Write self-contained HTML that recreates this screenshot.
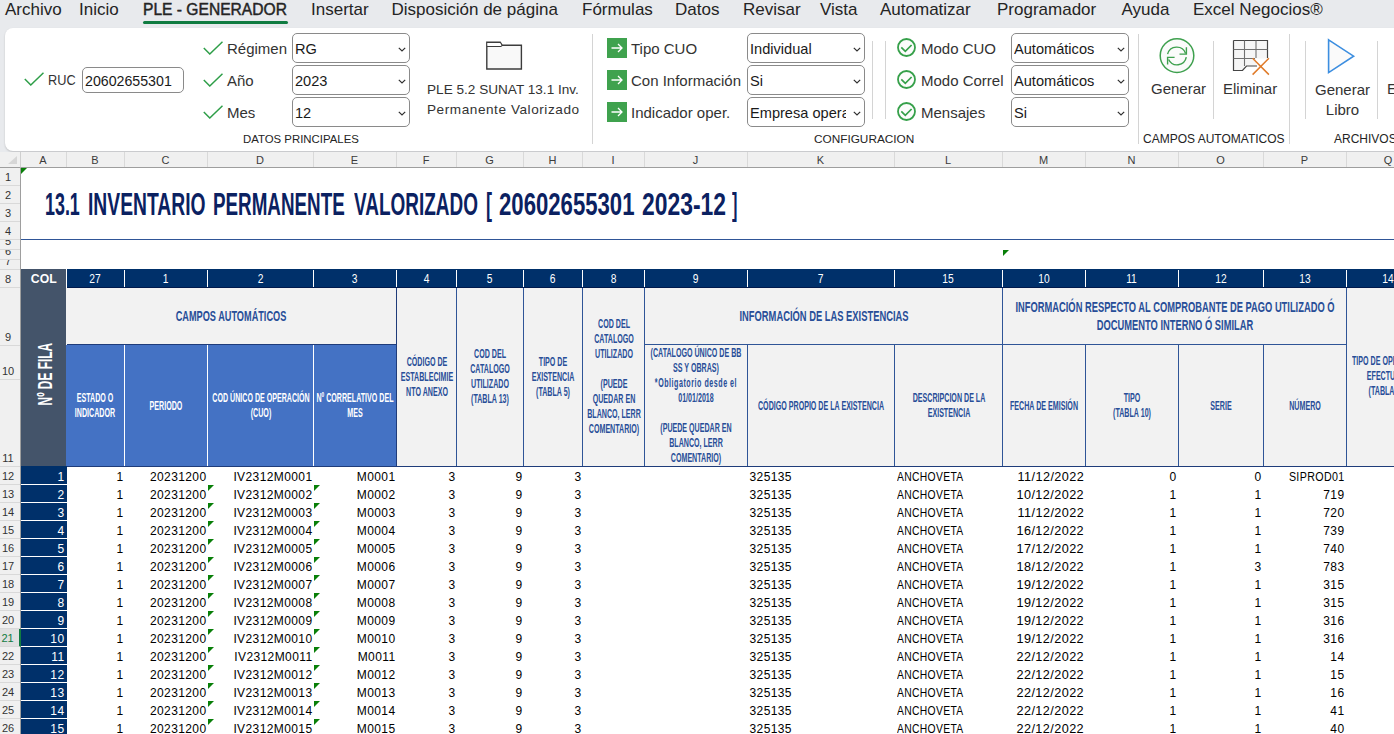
<!DOCTYPE html><html><head><meta charset="utf-8"><style>
*{box-sizing:border-box;margin:0;padding:0}
html,body{width:1394px;height:734px;overflow:hidden}
body{position:relative;background:#e8eaed;font-family:"Liberation Sans",sans-serif;color:#242424}
.ab{position:absolute;white-space:nowrap}
.tab{position:absolute;top:-1px;font-size:17px;color:#242424;line-height:22px}
.rb{position:absolute;font-size:15px;color:#333;line-height:18px;white-space:nowrap}
.sel{position:absolute;height:30px;border:1px solid #8a8a8a;border-radius:5px;background:#fff;font-size:14.6px;line-height:31px;padding-left:2px;padding-right:18px;color:#1a1a1a;overflow:hidden;white-space:nowrap}
.sel svg{position:absolute;right:3px;top:12.5px}
.sel i{font-style:normal;display:block;overflow:hidden;width:100%;height:100%}
.sep{position:absolute;width:1px;background:#d4d4d4}
.glab{position:absolute;font-size:12px;color:#242424;line-height:14px;white-space:nowrap}
.ch{position:absolute;top:152px;height:16px;font-size:11px;line-height:16px;text-align:center;color:#3b3b3b;border-right:1px solid #d9d9d9}
.rh{position:absolute;left:0;width:20px;padding-right:4px;font-size:11px;text-align:center;color:#333;border-bottom:1px solid #d9d9d9;overflow:hidden;display:flex;align-items:flex-end;justify-content:center;line-height:14px}
.c{position:absolute;overflow:hidden;white-space:nowrap}
.hd{position:absolute;display:flex;align-items:center;justify-content:center;text-align:center;color:#2f5597;font-weight:bold;overflow:hidden}
.hd>span{position:absolute;left:50%;top:50%;display:block;transform-origin:center center;line-height:15px}
.d{position:absolute;height:18px;font-size:12px;letter-spacing:0.4px;line-height:18px;color:#000;white-space:nowrap}
.tri{position:absolute;width:0;height:0;border-top:6px solid #087f08;border-right:6px solid transparent}

</style></head><body>
<div class="tab" style="left:5px">Archivo</div>
<div class="tab" style="left:79px">Inicio</div>
<div class="tab" style="left:311px">Insertar</div>
<div class="tab" style="left:391.5px">Disposición de página</div>
<div class="tab" style="left:582px">Fórmulas</div>
<div class="tab" style="left:675px">Datos</div>
<div class="tab" style="left:743px">Revisar</div>
<div class="tab" style="left:820px">Vista</div>
<div class="tab" style="left:880px">Automatizar</div>
<div class="tab" style="left:997px">Programador</div>
<div class="tab" style="left:1121.5px">Ayuda</div>
<div class="tab" style="left:1193px">Excel Negocios®</div>
<div class="tab" style="left:143px;font-size:16px;-webkit-text-stroke:0.45px #242424;transform:scaleX(0.975);transform-origin:0 0">PLE - GENERADOR</div>
<div class="ab" style="left:143px;top:21px;width:145px;height:3px;background:#107c41;border-radius:2px"></div>
<div class="ab" style="left:5px;top:28px;width:1400px;height:123px;background:#fff;border-radius:8px;box-shadow:0 1px 2px rgba(0,0,0,.18)"></div>
<svg class="ab" style="left:24px;top:71.5px" width="20" height="14" viewBox="0 0 20 14"><path d="M0.8 7 L6.8 13 L19.5 0.8" fill="none" stroke="#2e9e48" stroke-width="1.5"/></svg>
<div class="rb" style="left:48px;top:71px;transform:scaleX(0.85);transform-origin:0 0">RUC</div>
<div class="ab" style="left:82px;top:67px;width:102px;height:26px;border:1px solid #8a8a8a;border-radius:5px;background:#fff"></div>
<div class="rb" style="left:85px;top:72px;font-size:14.2px;color:#1a1a1a">20602655301</div>
<svg class="ab" style="left:203px;top:41px" width="20" height="14" viewBox="0 0 20 14"><path d="M0.8 7 L6.8 13 L19.5 0.8" fill="none" stroke="#2e9e48" stroke-width="1.5"/></svg>
<div class="rb" style="left:227px;top:40px">Régimen</div>
<div class="sel" style="left:292px;top:33px;width:118px"><i>RG</i><svg width="8" height="5" viewBox="0 0 8 5"><path d="M0.8 0.8 L4 4 L7.2 0.8" fill="none" stroke="#333" stroke-width="1.2"/></svg></div>
<svg class="ab" style="left:203px;top:73px" width="20" height="14" viewBox="0 0 20 14"><path d="M0.8 7 L6.8 13 L19.5 0.8" fill="none" stroke="#2e9e48" stroke-width="1.5"/></svg>
<div class="rb" style="left:227px;top:72px">Año</div>
<div class="sel" style="left:292px;top:65px;width:118px"><i>2023</i><svg width="8" height="5" viewBox="0 0 8 5"><path d="M0.8 0.8 L4 4 L7.2 0.8" fill="none" stroke="#333" stroke-width="1.2"/></svg></div>
<svg class="ab" style="left:203px;top:105px" width="20" height="14" viewBox="0 0 20 14"><path d="M0.8 7 L6.8 13 L19.5 0.8" fill="none" stroke="#2e9e48" stroke-width="1.5"/></svg>
<div class="rb" style="left:227px;top:104px">Mes</div>
<div class="sel" style="left:292px;top:97px;width:118px"><i>12</i><svg width="8" height="5" viewBox="0 0 8 5"><path d="M0.8 0.8 L4 4 L7.2 0.8" fill="none" stroke="#333" stroke-width="1.2"/></svg></div>
<div class="glab" style="left:243px;top:132px;font-size:11.4px">DATOS PRINCIPALES</div>
<svg class="ab" style="left:485px;top:41px" width="38" height="30" viewBox="0 0 38 30"><path d="M1.8 1.3 H15.2 L17.3 4.3 H36.4 V28 H1.8 Z" fill="#f9f9f9" stroke="#3c3c3c" stroke-width="1.4"/><path d="M1.8 5.4 H15.8 L17.3 4.3" fill="none" stroke="#3c3c3c" stroke-width="1.3"/><path d="M2.5 2 H15 L16.5 4.3 L15.5 4.9 H2.5 Z" fill="#fff"/></svg>
<div class="rb" style="left:427px;top:80px;font-size:13.6px;line-height:20px">PLE 5.2 SUNAT 13.1 Inv.<br><span style="letter-spacing:0.55px">Permanente Valorizado</span></div>
<div class="sep" style="left:592px;top:34px;height:110px"></div>
<div class="ab" style="left:607px;top:38px;width:20px;height:20px;background:#3fa24e"><svg width="20" height="20" viewBox="0 0 20 20"><path d="M4.5 10 H15 M11 6 L15 10 L11 14" fill="none" stroke="#fff" stroke-width="1.3"/></svg></div>
<div class="rb" style="left:631px;top:40px">Tipo CUO</div>
<div class="sel" style="left:747px;top:33px;width:118px"><i>Individual</i><svg width="8" height="5" viewBox="0 0 8 5"><path d="M0.8 0.8 L4 4 L7.2 0.8" fill="none" stroke="#333" stroke-width="1.2"/></svg></div>
<div class="ab" style="left:607px;top:70px;width:20px;height:20px;background:#3fa24e"><svg width="20" height="20" viewBox="0 0 20 20"><path d="M4.5 10 H15 M11 6 L15 10 L11 14" fill="none" stroke="#fff" stroke-width="1.3"/></svg></div>
<div class="rb" style="left:631px;top:72px">Con Información</div>
<div class="sel" style="left:747px;top:65px;width:118px"><i>Si</i><svg width="8" height="5" viewBox="0 0 8 5"><path d="M0.8 0.8 L4 4 L7.2 0.8" fill="none" stroke="#333" stroke-width="1.2"/></svg></div>
<div class="ab" style="left:607px;top:102px;width:20px;height:20px;background:#3fa24e"><svg width="20" height="20" viewBox="0 0 20 20"><path d="M4.5 10 H15 M11 6 L15 10 L11 14" fill="none" stroke="#fff" stroke-width="1.3"/></svg></div>
<div class="rb" style="left:631px;top:104px">Indicador oper.</div>
<div class="sel" style="left:747px;top:97px;width:118px"><i>Empresa opera</i><svg width="8" height="5" viewBox="0 0 8 5"><path d="M0.8 0.8 L4 4 L7.2 0.8" fill="none" stroke="#333" stroke-width="1.2"/></svg></div>
<div class="glab" style="left:814px;top:132px;font-size:11.8px">CONFIGURACION</div>
<div class="sep" style="left:872px;top:41px;height:78px"></div>
<div class="sep" style="left:885px;top:41px;height:78px"></div>
<svg class="ab" style="left:897px;top:38px" width="19" height="19" viewBox="0 0 19 19"><circle cx="9.5" cy="9.5" r="8.5" fill="#fcfcfc" stroke="#36a04a" stroke-width="1.8"/><path d="M4.3 9.4 L8.3 13.3 L14.6 7" fill="none" stroke="#36a04a" stroke-width="1.7"/></svg>
<div class="rb" style="left:921px;top:40px">Modo CUO</div>
<div class="sel" style="left:1011px;top:33px;width:118px"><i>Automáticos</i><svg width="8" height="5" viewBox="0 0 8 5"><path d="M0.8 0.8 L4 4 L7.2 0.8" fill="none" stroke="#333" stroke-width="1.2"/></svg></div>
<svg class="ab" style="left:897px;top:70px" width="19" height="19" viewBox="0 0 19 19"><circle cx="9.5" cy="9.5" r="8.5" fill="#fcfcfc" stroke="#36a04a" stroke-width="1.8"/><path d="M4.3 9.4 L8.3 13.3 L14.6 7" fill="none" stroke="#36a04a" stroke-width="1.7"/></svg>
<div class="rb" style="left:921px;top:72px">Modo Correl</div>
<div class="sel" style="left:1011px;top:65px;width:118px"><i>Automáticos</i><svg width="8" height="5" viewBox="0 0 8 5"><path d="M0.8 0.8 L4 4 L7.2 0.8" fill="none" stroke="#333" stroke-width="1.2"/></svg></div>
<svg class="ab" style="left:897px;top:102px" width="19" height="19" viewBox="0 0 19 19"><circle cx="9.5" cy="9.5" r="8.5" fill="#fcfcfc" stroke="#36a04a" stroke-width="1.8"/><path d="M4.3 9.4 L8.3 13.3 L14.6 7" fill="none" stroke="#36a04a" stroke-width="1.7"/></svg>
<div class="rb" style="left:921px;top:104px">Mensajes</div>
<div class="sel" style="left:1011px;top:97px;width:118px"><i>Si</i><svg width="8" height="5" viewBox="0 0 8 5"><path d="M0.8 0.8 L4 4 L7.2 0.8" fill="none" stroke="#333" stroke-width="1.2"/></svg></div>
<div class="sep" style="left:1138px;top:34px;height:110px"></div>
<svg class="ab" style="left:1158px;top:37px" width="38" height="38" viewBox="0 0 38 38"><circle cx="19" cy="18.6" r="16.8" fill="#fbfbfb" stroke="#3ea04e" stroke-width="1.5"/><g fill="none" stroke="#3ea04e" stroke-width="1.4"><path d="M9.6 17.2 A9.4 9.4 0 0 1 27.6 16.4"/><path d="M28.4 10.2 V17.1 H21.5"/><path d="M28.3 20.2 A9.4 9.4 0 0 1 10.6 22.5"/><path d="M16.6 20.4 H9.6 V27.6"/></g></svg>
<svg class="ab" style="left:1230px;top:38px" width="42" height="40" viewBox="0 0 42 40"><path d="M3.5 2.5 H37.5 V20.5 H26 V28 H3.5 Z" fill="#f6f6f6"/><path d="M3.5 28 V32.5 H12.5 L16.5 28 H26" fill="#f6f6f6"/><g fill="none" stroke="#454545" stroke-width="1.2"><path d="M3.5 2.5 H37.5 V20"/><path d="M3.5 2.5 V32.5 H12.5 L16.5 28 H27"/></g><g fill="none" stroke="#707070" stroke-width="1.1"><path d="M3.5 11.5 H37.5 M3.5 20.5 H25 M14.5 2.5 V28 M26 2.5 V20"/></g><path d="M22.6 20.3 L38.9 36.6 M38.9 20.3 L22.6 36.6" stroke="#e07b2a" stroke-width="1.5"/></svg>
<div class="rb" style="left:1151px;top:80px">Generar</div>
<div class="sep" style="left:1213px;top:41px;height:78px"></div>
<div class="rb" style="left:1223px;top:80px">Eliminar</div>
<div class="glab" style="left:1143px;top:132px">CAMPOS AUTOMATICOS</div>
<div class="sep" style="left:1289px;top:34px;height:110px"></div>
<div class="sep" style="left:1305px;top:41px;height:78px"></div>
<svg class="ab" style="left:1327px;top:38px" width="30" height="37" viewBox="0 0 30 37"><path d="M1.6 1.8 L26.6 18.2 L1.6 34.6 Z" fill="#fafafa" stroke="#3c8ee0" stroke-width="1.6" stroke-linejoin="miter"/></svg>
<div class="rb" style="left:1315px;top:80px;text-align:center;line-height:20px">Generar<br><span style="display:block;text-align:center">Libro</span></div>
<div class="sep" style="left:1377px;top:41px;height:78px"></div>
<div class="rb" style="left:1387px;top:80px">E</div>
<div class="glab" style="left:1334px;top:132px">ARCHIVOS</div>
<div class="ab" style="left:21px;top:168px;width:1373px;height:566px;background:#fff"></div>
<div class="ab" style="left:0;top:152px;width:1394px;height:16px;background:#f0f0f0;border-bottom:1px solid #9e9e9e"></div>
<div class="ab" style="left:0;top:152px;width:21px;height:16px;background:#f0f0f0;border-right:1px solid #cfcfcf;border-bottom:1px solid #9e9e9e"></div>
<svg class="ab" style="left:8px;top:156px" width="10" height="9"><path d="M9 0 V8 H0 Z" fill="#d6d6d6"/></svg>
<div class="ch" style="left:20px;width:47px;height:15px">A</div>
<div class="ch" style="left:66px;width:59px;height:15px">B</div>
<div class="ch" style="left:124px;width:84px;height:15px">C</div>
<div class="ch" style="left:207px;width:107px;height:15px">D</div>
<div class="ch" style="left:313px;width:84px;height:15px">E</div>
<div class="ch" style="left:396px;width:61px;height:15px">F</div>
<div class="ch" style="left:456px;width:68px;height:15px">G</div>
<div class="ch" style="left:523px;width:60px;height:15px">H</div>
<div class="ch" style="left:582px;width:63px;height:15px">I</div>
<div class="ch" style="left:644px;width:104px;height:15px">J</div>
<div class="ch" style="left:747px;width:148px;height:15px">K</div>
<div class="ch" style="left:894px;width:109px;height:15px">L</div>
<div class="ch" style="left:1002px;width:84px;height:15px">M</div>
<div class="ch" style="left:1085px;width:94px;height:15px">N</div>
<div class="ch" style="left:1178px;width:86px;height:15px">O</div>
<div class="ch" style="left:1263px;width:84px;height:15px">P</div>
<div class="ch" style="left:1346px;width:85px;height:15px">Q</div>
<div class="ab" style="left:0;top:168px;width:21px;height:566px;background:#f0f0f0;border-right:1px solid #9e9e9e"></div>
<div class="rh" style="top:169px;height:17px;padding-bottom:1px;">1</div>
<div class="rh" style="top:186px;height:18px;padding-bottom:1px;">2</div>
<div class="rh" style="top:204px;height:18px;padding-bottom:1px;">3</div>
<div class="rh" style="top:222px;height:18px;padding-bottom:1px;">4</div>
<div class="rh" style="top:240px;height:10px;padding-bottom:1px;">5</div>
<div class="rh" style="top:250px;height:10px;padding-bottom:1px;">6</div>
<div class="rh" style="top:260px;height:10px;padding-bottom:1px;">7</div>
<div class="rh" style="top:270px;height:18px;padding-bottom:1px;">8</div>
<div class="rh" style="top:288px;height:58px;padding-bottom:1px;">9</div>
<div class="rh" style="top:346px;height:34px;padding-bottom:1px;">10</div>
<div class="rh" style="top:380px;height:87px;padding-bottom:1px;">11</div>
<div class="rh" style="top:467px;height:18px;padding-bottom:1px;">12</div>
<div class="rh" style="top:485px;height:18px;padding-bottom:1px;">13</div>
<div class="rh" style="top:503px;height:18px;padding-bottom:1px;">14</div>
<div class="rh" style="top:521px;height:18px;padding-bottom:1px;">15</div>
<div class="rh" style="top:539px;height:18px;padding-bottom:1px;">16</div>
<div class="rh" style="top:557px;height:18px;padding-bottom:1px;">17</div>
<div class="rh" style="top:575px;height:18px;padding-bottom:1px;">18</div>
<div class="rh" style="top:593px;height:18px;padding-bottom:1px;">19</div>
<div class="rh" style="top:611px;height:18px;padding-bottom:1px;">20</div>
<div class="rh" style="top:629px;height:18px;padding-bottom:1px;background:#e0e0e0;color:#107c41;border-right:2px solid #107c41;width:21px;">21</div>
<div class="rh" style="top:647px;height:18px;padding-bottom:1px;">22</div>
<div class="rh" style="top:665px;height:18px;padding-bottom:1px;">23</div>
<div class="rh" style="top:683px;height:18px;padding-bottom:1px;">24</div>
<div class="rh" style="top:701px;height:18px;padding-bottom:1px;">25</div>
<div class="rh" style="top:719px;height:18px;padding-bottom:1px;">26</div>
<div class="rh" style="top:737px;height:18px;padding-bottom:1px;">27</div>
<div class="ab" style="left:45.2px;top:187px;font-size:32px;font-weight:bold;color:#0b2161;line-height:34px;transform:scaleX(0.5588);transform-origin:0 0">13.1</div>
<div class="ab" style="left:87.8px;top:187px;font-size:32px;font-weight:bold;color:#0b2161;line-height:34px;transform:scaleX(0.6027);transform-origin:0 0">INVENTARIO</div>
<div class="ab" style="left:213px;top:187px;font-size:32px;font-weight:bold;color:#0b2161;line-height:34px;transform:scaleX(0.5879);transform-origin:0 0">PERMANENTE</div>
<div class="ab" style="left:353.8px;top:187px;font-size:32px;font-weight:bold;color:#0b2161;line-height:34px;transform:scaleX(0.5928);transform-origin:0 0">VALORIZADO</div>
<div class="ab" style="left:486px;top:187px;font-size:32px;font-weight:bold;color:#0b2161;line-height:34px;transform:scaleX(0.5629);transform-origin:0 0">[</div>
<div class="ab" style="left:498.5px;top:187px;font-size:32px;font-weight:bold;color:#0b2161;line-height:34px;transform:scaleX(0.6922);transform-origin:0 0">20602655301</div>
<div class="ab" style="left:641.8px;top:187px;font-size:32px;font-weight:bold;color:#0b2161;line-height:34px;transform:scaleX(0.7153);transform-origin:0 0">2023-12</div>
<div class="ab" style="left:732px;top:187px;font-size:32px;font-weight:bold;color:#0b2161;line-height:34px;transform:scaleX(0.5066);transform-origin:0 0">]</div>
<div class="ab" style="left:21px;top:239px;width:1373px;height:1px;background:#2f5597"></div>
<div class="tri" style="left:21px;top:168px"></div>
<div class="tri" style="left:1003px;top:250px"></div>
<div class="c" style="left:21px;top:269px;width:45px;height:197px;background:#44546a"></div>
<div class="ab" style="left:21px;top:270px;width:46px;height:18px;color:#fff;font-weight:bold;font-size:13px;line-height:18px;text-align:center"><span style="display:inline-block;transform:scaleX(0.94)">COL</span></div>
<div class="c" style="left:67px;top:269px;width:1327px;height:19px;background:#00306a;border-bottom:1px solid #001a4d"></div>
<div class="ab" style="left:66px;top:270px;width:58px;height:18px;color:#fff;font-size:12.5px;line-height:18px;text-align:center"><span style="display:inline-block;transform:scaleX(0.82)">27</span></div>
<div class="ab" style="left:124px;top:270px;width:83px;height:18px;color:#fff;font-size:12.5px;line-height:18px;text-align:center"><span style="display:inline-block;transform:scaleX(0.82)">1</span></div>
<div class="ab" style="left:124px;top:270px;width:1px;height:17px;background:#fff"></div>
<div class="ab" style="left:207px;top:270px;width:106px;height:18px;color:#fff;font-size:12.5px;line-height:18px;text-align:center"><span style="display:inline-block;transform:scaleX(0.82)">2</span></div>
<div class="ab" style="left:207px;top:270px;width:1px;height:17px;background:#fff"></div>
<div class="ab" style="left:313px;top:270px;width:83px;height:18px;color:#fff;font-size:12.5px;line-height:18px;text-align:center"><span style="display:inline-block;transform:scaleX(0.82)">3</span></div>
<div class="ab" style="left:313px;top:270px;width:1px;height:17px;background:#fff"></div>
<div class="ab" style="left:396px;top:270px;width:60px;height:18px;color:#fff;font-size:12.5px;line-height:18px;text-align:center"><span style="display:inline-block;transform:scaleX(0.82)">4</span></div>
<div class="ab" style="left:396px;top:270px;width:1px;height:17px;background:#fff"></div>
<div class="ab" style="left:456px;top:270px;width:67px;height:18px;color:#fff;font-size:12.5px;line-height:18px;text-align:center"><span style="display:inline-block;transform:scaleX(0.82)">5</span></div>
<div class="ab" style="left:456px;top:270px;width:1px;height:17px;background:#fff"></div>
<div class="ab" style="left:523px;top:270px;width:59px;height:18px;color:#fff;font-size:12.5px;line-height:18px;text-align:center"><span style="display:inline-block;transform:scaleX(0.82)">6</span></div>
<div class="ab" style="left:523px;top:270px;width:1px;height:17px;background:#fff"></div>
<div class="ab" style="left:582px;top:270px;width:62px;height:18px;color:#fff;font-size:12.5px;line-height:18px;text-align:center"><span style="display:inline-block;transform:scaleX(0.82)">8</span></div>
<div class="ab" style="left:582px;top:270px;width:1px;height:17px;background:#fff"></div>
<div class="ab" style="left:644px;top:270px;width:103px;height:18px;color:#fff;font-size:12.5px;line-height:18px;text-align:center"><span style="display:inline-block;transform:scaleX(0.82)">9</span></div>
<div class="ab" style="left:644px;top:270px;width:1px;height:17px;background:#fff"></div>
<div class="ab" style="left:747px;top:270px;width:147px;height:18px;color:#fff;font-size:12.5px;line-height:18px;text-align:center"><span style="display:inline-block;transform:scaleX(0.82)">7</span></div>
<div class="ab" style="left:747px;top:270px;width:1px;height:17px;background:#fff"></div>
<div class="ab" style="left:894px;top:270px;width:108px;height:18px;color:#fff;font-size:12.5px;line-height:18px;text-align:center"><span style="display:inline-block;transform:scaleX(0.82)">15</span></div>
<div class="ab" style="left:894px;top:270px;width:1px;height:17px;background:#fff"></div>
<div class="ab" style="left:1002px;top:270px;width:83px;height:18px;color:#fff;font-size:12.5px;line-height:18px;text-align:center"><span style="display:inline-block;transform:scaleX(0.82)">10</span></div>
<div class="ab" style="left:1002px;top:270px;width:1px;height:17px;background:#fff"></div>
<div class="ab" style="left:1085px;top:270px;width:93px;height:18px;color:#fff;font-size:12.5px;line-height:18px;text-align:center"><span style="display:inline-block;transform:scaleX(0.82)">11</span></div>
<div class="ab" style="left:1085px;top:270px;width:1px;height:17px;background:#fff"></div>
<div class="ab" style="left:1178px;top:270px;width:85px;height:18px;color:#fff;font-size:12.5px;line-height:18px;text-align:center"><span style="display:inline-block;transform:scaleX(0.82)">12</span></div>
<div class="ab" style="left:1178px;top:270px;width:1px;height:17px;background:#fff"></div>
<div class="ab" style="left:1263px;top:270px;width:83px;height:18px;color:#fff;font-size:12.5px;line-height:18px;text-align:center"><span style="display:inline-block;transform:scaleX(0.82)">13</span></div>
<div class="ab" style="left:1263px;top:270px;width:1px;height:17px;background:#fff"></div>
<div class="ab" style="left:1346px;top:270px;width:84px;height:18px;color:#fff;font-size:12.5px;line-height:18px;text-align:center"><span style="display:inline-block;transform:scaleX(0.82)">14</span></div>
<div class="ab" style="left:1346px;top:270px;width:1px;height:17px;background:#fff"></div>
<div class="ab" style="left:44.5px;top:374px;width:0;height:0"><div style="position:absolute;left:-60px;top:-11px;width:120px;height:22px;text-align:center;transform:rotate(-90deg);color:#fff;font-weight:bold;font-size:20.5px;line-height:22px"><span style="display:inline-block;transform:scaleX(0.58)">Nº DE FILA</span></div></div>
<div class="hd" style="left:66px;top:288px;width:330px;height:57px;background:#f2f2f2;color:#284e98;font-size:15.5px;"><span style="top:calc(50% + -2px);transform:translate(-50%,-50%) scaleX(0.592);line-height:15px;white-space:nowrap">CAMPOS AUTOMÁTICOS</span></div>
<div class="hd" style="left:66px;top:345px;width:58px;height:121px;background:#4472c4;color:#fff;font-size:12px;"><span style="top:calc(50% + 0px);transform:translate(-50%,-50%) scaleX(0.592);line-height:15px;white-space:nowrap">ESTADO O<br>INDICADOR</span></div>
<div class="hd" style="left:125px;top:345px;width:82px;height:121px;background:#4472c4;color:#fff;font-size:12px;"><span style="top:calc(50% + 0px);transform:translate(-50%,-50%) scaleX(0.592);line-height:15px;white-space:nowrap">PERIODO</span></div>
<div class="hd" style="left:208px;top:345px;width:105px;height:121px;background:#4472c4;color:#fff;font-size:12px;"><span style="top:calc(50% + 0px);transform:translate(-50%,-50%) scaleX(0.592);line-height:15px;white-space:nowrap">COD ÚNICO DE OPERACIÓN<br>(CUO)</span></div>
<div class="hd" style="left:314px;top:345px;width:82px;height:121px;background:#4472c4;color:#fff;font-size:12px;"><span style="top:calc(50% + 0px);transform:translate(-50%,-50%) scaleX(0.592);line-height:15px;white-space:nowrap">Nº CORRELATIVO DEL<br>MES</span></div>
<div class="hd" style="left:397px;top:288px;width:59px;height:178px;background:#f2f2f2;color:#284e98;font-size:12px;"><span style="top:calc(50% + 0px);transform:translate(-50%,-50%) scaleX(0.592);line-height:15px;white-space:nowrap">CÓDIGO DE<br>ESTABLECIMIE<br>NTO ANEXO</span></div>
<div class="hd" style="left:457px;top:288px;width:66px;height:178px;background:#f2f2f2;color:#284e98;font-size:12px;"><span style="top:calc(50% + 0px);transform:translate(-50%,-50%) scaleX(0.592);line-height:15px;white-space:nowrap">COD DEL<br>CATALOGO<br>UTILIZADO<br>(TABLA 13)</span></div>
<div class="hd" style="left:524px;top:288px;width:58px;height:178px;background:#f2f2f2;color:#284e98;font-size:12px;"><span style="top:calc(50% + 0px);transform:translate(-50%,-50%) scaleX(0.592);line-height:15px;white-space:nowrap">TIPO DE<br>EXISTENCIA<br>(TABLA 5)</span></div>
<div class="hd" style="left:583px;top:288px;width:61px;height:178px;background:#f2f2f2;color:#284e98;font-size:12px;"><span style="top:calc(50% + 0px);transform:translate(-50%,-50%) scaleX(0.592);line-height:15px;white-space:nowrap">COD DEL<br>CATALOGO<br>UTILIZADO<br>&nbsp;<br>(PUEDE<br>QUEDAR EN<br>BLANCO, LERR<br>COMENTARIO)</span></div>
<div class="hd" style="left:645px;top:288px;width:357px;height:57px;background:#f2f2f2;color:#284e98;font-size:15.5px;"><span style="top:calc(50% + -2px);transform:translate(-50%,-50%) scaleX(0.604);line-height:15px;white-space:nowrap">INFORMACIÓN DE LAS EXISTENCIAS</span></div>
<div class="hd" style="left:645px;top:345px;width:102px;height:121px;background:#f2f2f2;color:#284e98;font-size:12px;"><span style="top:calc(50% + 0px);transform:translate(-50%,-50%) scaleX(0.592);line-height:15px;white-space:nowrap">(CATALOGO ÚNICO DE BB<br>SS Y OBRAS)<br><span style="letter-spacing:0.9px">*Obligatorio desde el</span><br>01/01/2018<br>&nbsp;<br>(PUEDE QUEDAR EN<br>BLANCO, LERR<br>COMENTARIO)</span></div>
<div class="hd" style="left:748px;top:345px;width:146px;height:121px;background:#f2f2f2;color:#284e98;font-size:12px;"><span style="top:calc(50% + 0px);transform:translate(-50%,-50%) scaleX(0.592);line-height:15px;white-space:nowrap">CÓDIGO PROPIO DE LA EXISTENCIA</span></div>
<div class="hd" style="left:895px;top:345px;width:107px;height:121px;background:#f2f2f2;color:#284e98;font-size:12px;"><span style="top:calc(50% + 0px);transform:translate(-50%,-50%) scaleX(0.592);line-height:15px;white-space:nowrap">DESCRIPCION DE LA<br>EXISTENCIA</span></div>
<div class="hd" style="left:1003px;top:288px;width:343px;height:57px;background:#f2f2f2;color:#284e98;font-size:15.5px;"><span style="top:calc(50% + -1px);transform:translate(-50%,-50%) scaleX(0.602);line-height:18px;white-space:nowrap">INFORMACIÓN RESPECTO AL COMPROBANTE DE PAGO UTILIZADO Ó<br>DOCUMENTO INTERNO Ó SIMILAR</span></div>
<div class="hd" style="left:1003px;top:345px;width:82px;height:121px;background:#f2f2f2;color:#284e98;font-size:12px;"><span style="top:calc(50% + 0px);transform:translate(-50%,-50%) scaleX(0.592);line-height:15px;white-space:nowrap">FECHA DE EMISIÓN</span></div>
<div class="hd" style="left:1086px;top:345px;width:92px;height:121px;background:#f2f2f2;color:#284e98;font-size:12px;"><span style="top:calc(50% + 0px);transform:translate(-50%,-50%) scaleX(0.592);line-height:15px;white-space:nowrap">TIPO<br>(TABLA 10)</span></div>
<div class="hd" style="left:1179px;top:345px;width:84px;height:121px;background:#f2f2f2;color:#284e98;font-size:12px;"><span style="top:calc(50% + 0px);transform:translate(-50%,-50%) scaleX(0.592);line-height:15px;white-space:nowrap">SERIE</span></div>
<div class="hd" style="left:1264px;top:345px;width:82px;height:121px;background:#f2f2f2;color:#284e98;font-size:12px;"><span style="top:calc(50% + 0px);transform:translate(-50%,-50%) scaleX(0.592);line-height:15px;white-space:nowrap">NÚMERO</span></div>
<div class="ab" style="left:1347px;top:288px;width:60px;height:178px;background:#f2f2f2"></div>
<div class="ab" style="left:1352px;top:354px;color:#284e98;font-weight:bold;font-size:12px;line-height:15px;transform:scaleX(0.592);transform-origin:0 0;width:180px"><span style="display:block">TIPO DE OPERACIÓN</span><span style="display:block;padding-left:25px">EFECTUADA</span><span style="display:block;padding-left:28px">(TABLA 12)</span></div>
<div class="ab" style="left:67px;top:344px;width:329px;height:1px;background:#1f3c7a"></div>
<div class="ab" style="left:644px;top:344px;width:358px;height:1px;background:#2f5597"></div>
<div class="ab" style="left:1002px;top:344px;width:344px;height:1px;background:#2f5597"></div>
<div class="ab" style="left:67px;top:466px;width:1327px;height:1px;background:#1f3c7a"></div>
<div class="ab" style="left:124px;top:345px;width:1px;height:121px;background:#fff"></div>
<div class="ab" style="left:207px;top:345px;width:1px;height:121px;background:#fff"></div>
<div class="ab" style="left:313px;top:345px;width:1px;height:121px;background:#fff"></div>
<div class="ab" style="left:396px;top:288px;width:1px;height:178px;background:#1f3c7a"></div>
<div class="ab" style="left:456px;top:288px;width:1px;height:178px;background:#2f5597"></div>
<div class="ab" style="left:523px;top:288px;width:1px;height:178px;background:#2f5597"></div>
<div class="ab" style="left:582px;top:288px;width:1px;height:178px;background:#2f5597"></div>
<div class="ab" style="left:644px;top:288px;width:1px;height:178px;background:#2f5597"></div>
<div class="ab" style="left:1002px;top:288px;width:1px;height:178px;background:#2f5597"></div>
<div class="ab" style="left:1346px;top:288px;width:1px;height:178px;background:#2f5597"></div>
<div class="ab" style="left:747px;top:345px;width:1px;height:121px;background:#2f5597"></div>
<div class="ab" style="left:894px;top:345px;width:1px;height:121px;background:#2f5597"></div>
<div class="ab" style="left:1085px;top:345px;width:1px;height:121px;background:#2f5597"></div>
<div class="ab" style="left:1178px;top:345px;width:1px;height:121px;background:#2f5597"></div>
<div class="ab" style="left:1263px;top:345px;width:1px;height:121px;background:#2f5597"></div>
<div class="ab" style="left:21px;top:466px;width:46px;height:18px;background:#00306a"></div>
<div class="d" style="right:1329.5px;top:468px;color:#fff;">1</div>
<div class="d" style="right:1270.5px;top:468px;color:#000;">1</div>
<div class="d" style="right:1187.5px;top:468px;color:#000;">20231200</div>
<div class="d" style="right:1081.5px;top:468px;color:#000;">IV2312M0001</div>
<div class="d" style="right:998.5px;top:468px;color:#000;">M0001</div>
<div class="d" style="right:938.5px;top:468px;color:#000;">3</div>
<div class="d" style="right:871.5px;top:468px;color:#000;">9</div>
<div class="d" style="right:812.5px;top:468px;color:#000;">3</div>
<div class="d" style="left:749.5px;top:468px;">325135</div>
<div class="d" style="left:897px;top:468px;transform:scaleX(0.86);transform-origin:0 0">ANCHOVETA</div>
<div class="d" style="right:309.5px;top:468px;color:#000;transform:scaleX(1.055);transform-origin:100% 0;">11/12/2022</div>
<div class="d" style="right:217.5px;top:468px;color:#000;">0</div>
<div class="d" style="right:132.5px;top:468px;color:#000;">0</div>
<div class="d" style="right:49.5px;top:468px;color:#000;transform:scaleX(0.89);transform-origin:100% 0;">SIPROD01</div>
<div class="ab" style="left:21px;top:485px;width:46px;height:17px;background:#00306a"></div>
<div class="d" style="right:1329.5px;top:486px;color:#fff;">2</div>
<div class="d" style="right:1270.5px;top:486px;color:#000;">1</div>
<div class="d" style="right:1187.5px;top:486px;color:#000;">20231200</div>
<div class="d" style="right:1081.5px;top:486px;color:#000;">IV2312M0002</div>
<div class="d" style="right:998.5px;top:486px;color:#000;">M0002</div>
<div class="d" style="right:938.5px;top:486px;color:#000;">3</div>
<div class="d" style="right:871.5px;top:486px;color:#000;">9</div>
<div class="d" style="right:812.5px;top:486px;color:#000;">3</div>
<div class="d" style="left:749.5px;top:486px;">325135</div>
<div class="d" style="left:897px;top:486px;transform:scaleX(0.86);transform-origin:0 0">ANCHOVETA</div>
<div class="d" style="right:309.5px;top:486px;color:#000;transform:scaleX(1.055);transform-origin:100% 0;">10/12/2022</div>
<div class="d" style="right:217.5px;top:486px;color:#000;">1</div>
<div class="d" style="right:132.5px;top:486px;color:#000;">1</div>
<div class="d" style="right:49.5px;top:486px;color:#000;">719</div>
<div class="tri" style="left:208px;top:485px"></div>
<div class="tri" style="left:314px;top:485px"></div>
<div class="ab" style="left:21px;top:503px;width:46px;height:17px;background:#00306a"></div>
<div class="d" style="right:1329.5px;top:504px;color:#fff;">3</div>
<div class="d" style="right:1270.5px;top:504px;color:#000;">1</div>
<div class="d" style="right:1187.5px;top:504px;color:#000;">20231200</div>
<div class="d" style="right:1081.5px;top:504px;color:#000;">IV2312M0003</div>
<div class="d" style="right:998.5px;top:504px;color:#000;">M0003</div>
<div class="d" style="right:938.5px;top:504px;color:#000;">3</div>
<div class="d" style="right:871.5px;top:504px;color:#000;">9</div>
<div class="d" style="right:812.5px;top:504px;color:#000;">3</div>
<div class="d" style="left:749.5px;top:504px;">325135</div>
<div class="d" style="left:897px;top:504px;transform:scaleX(0.86);transform-origin:0 0">ANCHOVETA</div>
<div class="d" style="right:309.5px;top:504px;color:#000;transform:scaleX(1.055);transform-origin:100% 0;">11/12/2022</div>
<div class="d" style="right:217.5px;top:504px;color:#000;">1</div>
<div class="d" style="right:132.5px;top:504px;color:#000;">1</div>
<div class="d" style="right:49.5px;top:504px;color:#000;">720</div>
<div class="tri" style="left:208px;top:503px"></div>
<div class="tri" style="left:314px;top:503px"></div>
<div class="ab" style="left:21px;top:521px;width:46px;height:17px;background:#00306a"></div>
<div class="d" style="right:1329.5px;top:522px;color:#fff;">4</div>
<div class="d" style="right:1270.5px;top:522px;color:#000;">1</div>
<div class="d" style="right:1187.5px;top:522px;color:#000;">20231200</div>
<div class="d" style="right:1081.5px;top:522px;color:#000;">IV2312M0004</div>
<div class="d" style="right:998.5px;top:522px;color:#000;">M0004</div>
<div class="d" style="right:938.5px;top:522px;color:#000;">3</div>
<div class="d" style="right:871.5px;top:522px;color:#000;">9</div>
<div class="d" style="right:812.5px;top:522px;color:#000;">3</div>
<div class="d" style="left:749.5px;top:522px;">325135</div>
<div class="d" style="left:897px;top:522px;transform:scaleX(0.86);transform-origin:0 0">ANCHOVETA</div>
<div class="d" style="right:309.5px;top:522px;color:#000;transform:scaleX(1.055);transform-origin:100% 0;">16/12/2022</div>
<div class="d" style="right:217.5px;top:522px;color:#000;">1</div>
<div class="d" style="right:132.5px;top:522px;color:#000;">1</div>
<div class="d" style="right:49.5px;top:522px;color:#000;">739</div>
<div class="tri" style="left:208px;top:521px"></div>
<div class="tri" style="left:314px;top:521px"></div>
<div class="ab" style="left:21px;top:539px;width:46px;height:17px;background:#00306a"></div>
<div class="d" style="right:1329.5px;top:540px;color:#fff;">5</div>
<div class="d" style="right:1270.5px;top:540px;color:#000;">1</div>
<div class="d" style="right:1187.5px;top:540px;color:#000;">20231200</div>
<div class="d" style="right:1081.5px;top:540px;color:#000;">IV2312M0005</div>
<div class="d" style="right:998.5px;top:540px;color:#000;">M0005</div>
<div class="d" style="right:938.5px;top:540px;color:#000;">3</div>
<div class="d" style="right:871.5px;top:540px;color:#000;">9</div>
<div class="d" style="right:812.5px;top:540px;color:#000;">3</div>
<div class="d" style="left:749.5px;top:540px;">325135</div>
<div class="d" style="left:897px;top:540px;transform:scaleX(0.86);transform-origin:0 0">ANCHOVETA</div>
<div class="d" style="right:309.5px;top:540px;color:#000;transform:scaleX(1.055);transform-origin:100% 0;">17/12/2022</div>
<div class="d" style="right:217.5px;top:540px;color:#000;">1</div>
<div class="d" style="right:132.5px;top:540px;color:#000;">1</div>
<div class="d" style="right:49.5px;top:540px;color:#000;">740</div>
<div class="tri" style="left:208px;top:539px"></div>
<div class="tri" style="left:314px;top:539px"></div>
<div class="ab" style="left:21px;top:557px;width:46px;height:17px;background:#00306a"></div>
<div class="d" style="right:1329.5px;top:558px;color:#fff;">6</div>
<div class="d" style="right:1270.5px;top:558px;color:#000;">1</div>
<div class="d" style="right:1187.5px;top:558px;color:#000;">20231200</div>
<div class="d" style="right:1081.5px;top:558px;color:#000;">IV2312M0006</div>
<div class="d" style="right:998.5px;top:558px;color:#000;">M0006</div>
<div class="d" style="right:938.5px;top:558px;color:#000;">3</div>
<div class="d" style="right:871.5px;top:558px;color:#000;">9</div>
<div class="d" style="right:812.5px;top:558px;color:#000;">3</div>
<div class="d" style="left:749.5px;top:558px;">325135</div>
<div class="d" style="left:897px;top:558px;transform:scaleX(0.86);transform-origin:0 0">ANCHOVETA</div>
<div class="d" style="right:309.5px;top:558px;color:#000;transform:scaleX(1.055);transform-origin:100% 0;">18/12/2022</div>
<div class="d" style="right:217.5px;top:558px;color:#000;">1</div>
<div class="d" style="right:132.5px;top:558px;color:#000;">3</div>
<div class="d" style="right:49.5px;top:558px;color:#000;">783</div>
<div class="tri" style="left:208px;top:557px"></div>
<div class="tri" style="left:314px;top:557px"></div>
<div class="ab" style="left:21px;top:575px;width:46px;height:17px;background:#00306a"></div>
<div class="d" style="right:1329.5px;top:576px;color:#fff;">7</div>
<div class="d" style="right:1270.5px;top:576px;color:#000;">1</div>
<div class="d" style="right:1187.5px;top:576px;color:#000;">20231200</div>
<div class="d" style="right:1081.5px;top:576px;color:#000;">IV2312M0007</div>
<div class="d" style="right:998.5px;top:576px;color:#000;">M0007</div>
<div class="d" style="right:938.5px;top:576px;color:#000;">3</div>
<div class="d" style="right:871.5px;top:576px;color:#000;">9</div>
<div class="d" style="right:812.5px;top:576px;color:#000;">3</div>
<div class="d" style="left:749.5px;top:576px;">325135</div>
<div class="d" style="left:897px;top:576px;transform:scaleX(0.86);transform-origin:0 0">ANCHOVETA</div>
<div class="d" style="right:309.5px;top:576px;color:#000;transform:scaleX(1.055);transform-origin:100% 0;">19/12/2022</div>
<div class="d" style="right:217.5px;top:576px;color:#000;">1</div>
<div class="d" style="right:132.5px;top:576px;color:#000;">1</div>
<div class="d" style="right:49.5px;top:576px;color:#000;">315</div>
<div class="tri" style="left:208px;top:575px"></div>
<div class="tri" style="left:314px;top:575px"></div>
<div class="ab" style="left:21px;top:593px;width:46px;height:17px;background:#00306a"></div>
<div class="d" style="right:1329.5px;top:594px;color:#fff;">8</div>
<div class="d" style="right:1270.5px;top:594px;color:#000;">1</div>
<div class="d" style="right:1187.5px;top:594px;color:#000;">20231200</div>
<div class="d" style="right:1081.5px;top:594px;color:#000;">IV2312M0008</div>
<div class="d" style="right:998.5px;top:594px;color:#000;">M0008</div>
<div class="d" style="right:938.5px;top:594px;color:#000;">3</div>
<div class="d" style="right:871.5px;top:594px;color:#000;">9</div>
<div class="d" style="right:812.5px;top:594px;color:#000;">3</div>
<div class="d" style="left:749.5px;top:594px;">325135</div>
<div class="d" style="left:897px;top:594px;transform:scaleX(0.86);transform-origin:0 0">ANCHOVETA</div>
<div class="d" style="right:309.5px;top:594px;color:#000;transform:scaleX(1.055);transform-origin:100% 0;">19/12/2022</div>
<div class="d" style="right:217.5px;top:594px;color:#000;">1</div>
<div class="d" style="right:132.5px;top:594px;color:#000;">1</div>
<div class="d" style="right:49.5px;top:594px;color:#000;">315</div>
<div class="tri" style="left:208px;top:593px"></div>
<div class="tri" style="left:314px;top:593px"></div>
<div class="ab" style="left:21px;top:611px;width:46px;height:17px;background:#00306a"></div>
<div class="d" style="right:1329.5px;top:612px;color:#fff;">9</div>
<div class="d" style="right:1270.5px;top:612px;color:#000;">1</div>
<div class="d" style="right:1187.5px;top:612px;color:#000;">20231200</div>
<div class="d" style="right:1081.5px;top:612px;color:#000;">IV2312M0009</div>
<div class="d" style="right:998.5px;top:612px;color:#000;">M0009</div>
<div class="d" style="right:938.5px;top:612px;color:#000;">3</div>
<div class="d" style="right:871.5px;top:612px;color:#000;">9</div>
<div class="d" style="right:812.5px;top:612px;color:#000;">3</div>
<div class="d" style="left:749.5px;top:612px;">325135</div>
<div class="d" style="left:897px;top:612px;transform:scaleX(0.86);transform-origin:0 0">ANCHOVETA</div>
<div class="d" style="right:309.5px;top:612px;color:#000;transform:scaleX(1.055);transform-origin:100% 0;">19/12/2022</div>
<div class="d" style="right:217.5px;top:612px;color:#000;">1</div>
<div class="d" style="right:132.5px;top:612px;color:#000;">1</div>
<div class="d" style="right:49.5px;top:612px;color:#000;">316</div>
<div class="tri" style="left:208px;top:611px"></div>
<div class="tri" style="left:314px;top:611px"></div>
<div class="ab" style="left:21px;top:629px;width:46px;height:17px;background:#00306a"></div>
<div class="d" style="right:1329.5px;top:630px;color:#fff;">10</div>
<div class="d" style="right:1270.5px;top:630px;color:#000;">1</div>
<div class="d" style="right:1187.5px;top:630px;color:#000;">20231200</div>
<div class="d" style="right:1081.5px;top:630px;color:#000;">IV2312M0010</div>
<div class="d" style="right:998.5px;top:630px;color:#000;">M0010</div>
<div class="d" style="right:938.5px;top:630px;color:#000;">3</div>
<div class="d" style="right:871.5px;top:630px;color:#000;">9</div>
<div class="d" style="right:812.5px;top:630px;color:#000;">3</div>
<div class="d" style="left:749.5px;top:630px;">325135</div>
<div class="d" style="left:897px;top:630px;transform:scaleX(0.86);transform-origin:0 0">ANCHOVETA</div>
<div class="d" style="right:309.5px;top:630px;color:#000;transform:scaleX(1.055);transform-origin:100% 0;">19/12/2022</div>
<div class="d" style="right:217.5px;top:630px;color:#000;">1</div>
<div class="d" style="right:132.5px;top:630px;color:#000;">1</div>
<div class="d" style="right:49.5px;top:630px;color:#000;">316</div>
<div class="tri" style="left:208px;top:629px"></div>
<div class="tri" style="left:314px;top:629px"></div>
<div class="ab" style="left:21px;top:647px;width:46px;height:17px;background:#00306a"></div>
<div class="d" style="right:1329.5px;top:648px;color:#fff;">11</div>
<div class="d" style="right:1270.5px;top:648px;color:#000;">1</div>
<div class="d" style="right:1187.5px;top:648px;color:#000;">20231200</div>
<div class="d" style="right:1081.5px;top:648px;color:#000;">IV2312M0011</div>
<div class="d" style="right:998.5px;top:648px;color:#000;">M0011</div>
<div class="d" style="right:938.5px;top:648px;color:#000;">3</div>
<div class="d" style="right:871.5px;top:648px;color:#000;">9</div>
<div class="d" style="right:812.5px;top:648px;color:#000;">3</div>
<div class="d" style="left:749.5px;top:648px;">325135</div>
<div class="d" style="left:897px;top:648px;transform:scaleX(0.86);transform-origin:0 0">ANCHOVETA</div>
<div class="d" style="right:309.5px;top:648px;color:#000;transform:scaleX(1.055);transform-origin:100% 0;">22/12/2022</div>
<div class="d" style="right:217.5px;top:648px;color:#000;">1</div>
<div class="d" style="right:132.5px;top:648px;color:#000;">1</div>
<div class="d" style="right:49.5px;top:648px;color:#000;">14</div>
<div class="tri" style="left:208px;top:647px"></div>
<div class="tri" style="left:314px;top:647px"></div>
<div class="ab" style="left:21px;top:665px;width:46px;height:17px;background:#00306a"></div>
<div class="d" style="right:1329.5px;top:666px;color:#fff;">12</div>
<div class="d" style="right:1270.5px;top:666px;color:#000;">1</div>
<div class="d" style="right:1187.5px;top:666px;color:#000;">20231200</div>
<div class="d" style="right:1081.5px;top:666px;color:#000;">IV2312M0012</div>
<div class="d" style="right:998.5px;top:666px;color:#000;">M0012</div>
<div class="d" style="right:938.5px;top:666px;color:#000;">3</div>
<div class="d" style="right:871.5px;top:666px;color:#000;">9</div>
<div class="d" style="right:812.5px;top:666px;color:#000;">3</div>
<div class="d" style="left:749.5px;top:666px;">325135</div>
<div class="d" style="left:897px;top:666px;transform:scaleX(0.86);transform-origin:0 0">ANCHOVETA</div>
<div class="d" style="right:309.5px;top:666px;color:#000;transform:scaleX(1.055);transform-origin:100% 0;">22/12/2022</div>
<div class="d" style="right:217.5px;top:666px;color:#000;">1</div>
<div class="d" style="right:132.5px;top:666px;color:#000;">1</div>
<div class="d" style="right:49.5px;top:666px;color:#000;">15</div>
<div class="tri" style="left:208px;top:665px"></div>
<div class="tri" style="left:314px;top:665px"></div>
<div class="ab" style="left:21px;top:683px;width:46px;height:17px;background:#00306a"></div>
<div class="d" style="right:1329.5px;top:684px;color:#fff;">13</div>
<div class="d" style="right:1270.5px;top:684px;color:#000;">1</div>
<div class="d" style="right:1187.5px;top:684px;color:#000;">20231200</div>
<div class="d" style="right:1081.5px;top:684px;color:#000;">IV2312M0013</div>
<div class="d" style="right:998.5px;top:684px;color:#000;">M0013</div>
<div class="d" style="right:938.5px;top:684px;color:#000;">3</div>
<div class="d" style="right:871.5px;top:684px;color:#000;">9</div>
<div class="d" style="right:812.5px;top:684px;color:#000;">3</div>
<div class="d" style="left:749.5px;top:684px;">325135</div>
<div class="d" style="left:897px;top:684px;transform:scaleX(0.86);transform-origin:0 0">ANCHOVETA</div>
<div class="d" style="right:309.5px;top:684px;color:#000;transform:scaleX(1.055);transform-origin:100% 0;">22/12/2022</div>
<div class="d" style="right:217.5px;top:684px;color:#000;">1</div>
<div class="d" style="right:132.5px;top:684px;color:#000;">1</div>
<div class="d" style="right:49.5px;top:684px;color:#000;">16</div>
<div class="tri" style="left:208px;top:683px"></div>
<div class="tri" style="left:314px;top:683px"></div>
<div class="ab" style="left:21px;top:701px;width:46px;height:17px;background:#00306a"></div>
<div class="d" style="right:1329.5px;top:702px;color:#fff;">14</div>
<div class="d" style="right:1270.5px;top:702px;color:#000;">1</div>
<div class="d" style="right:1187.5px;top:702px;color:#000;">20231200</div>
<div class="d" style="right:1081.5px;top:702px;color:#000;">IV2312M0014</div>
<div class="d" style="right:998.5px;top:702px;color:#000;">M0014</div>
<div class="d" style="right:938.5px;top:702px;color:#000;">3</div>
<div class="d" style="right:871.5px;top:702px;color:#000;">9</div>
<div class="d" style="right:812.5px;top:702px;color:#000;">3</div>
<div class="d" style="left:749.5px;top:702px;">325135</div>
<div class="d" style="left:897px;top:702px;transform:scaleX(0.86);transform-origin:0 0">ANCHOVETA</div>
<div class="d" style="right:309.5px;top:702px;color:#000;transform:scaleX(1.055);transform-origin:100% 0;">22/12/2022</div>
<div class="d" style="right:217.5px;top:702px;color:#000;">1</div>
<div class="d" style="right:132.5px;top:702px;color:#000;">1</div>
<div class="d" style="right:49.5px;top:702px;color:#000;">41</div>
<div class="tri" style="left:208px;top:701px"></div>
<div class="tri" style="left:314px;top:701px"></div>
<div class="ab" style="left:21px;top:719px;width:46px;height:17px;background:#00306a"></div>
<div class="d" style="right:1329.5px;top:720px;color:#fff;">15</div>
<div class="d" style="right:1270.5px;top:720px;color:#000;">1</div>
<div class="d" style="right:1187.5px;top:720px;color:#000;">20231200</div>
<div class="d" style="right:1081.5px;top:720px;color:#000;">IV2312M0015</div>
<div class="d" style="right:998.5px;top:720px;color:#000;">M0015</div>
<div class="d" style="right:938.5px;top:720px;color:#000;">3</div>
<div class="d" style="right:871.5px;top:720px;color:#000;">9</div>
<div class="d" style="right:812.5px;top:720px;color:#000;">3</div>
<div class="d" style="left:749.5px;top:720px;">325135</div>
<div class="d" style="left:897px;top:720px;transform:scaleX(0.86);transform-origin:0 0">ANCHOVETA</div>
<div class="d" style="right:309.5px;top:720px;color:#000;transform:scaleX(1.055);transform-origin:100% 0;">22/12/2022</div>
<div class="d" style="right:217.5px;top:720px;color:#000;">1</div>
<div class="d" style="right:132.5px;top:720px;color:#000;">1</div>
<div class="d" style="right:49.5px;top:720px;color:#000;">40</div>
<div class="tri" style="left:208px;top:719px"></div>
<div class="tri" style="left:314px;top:719px"></div>
</body></html>
